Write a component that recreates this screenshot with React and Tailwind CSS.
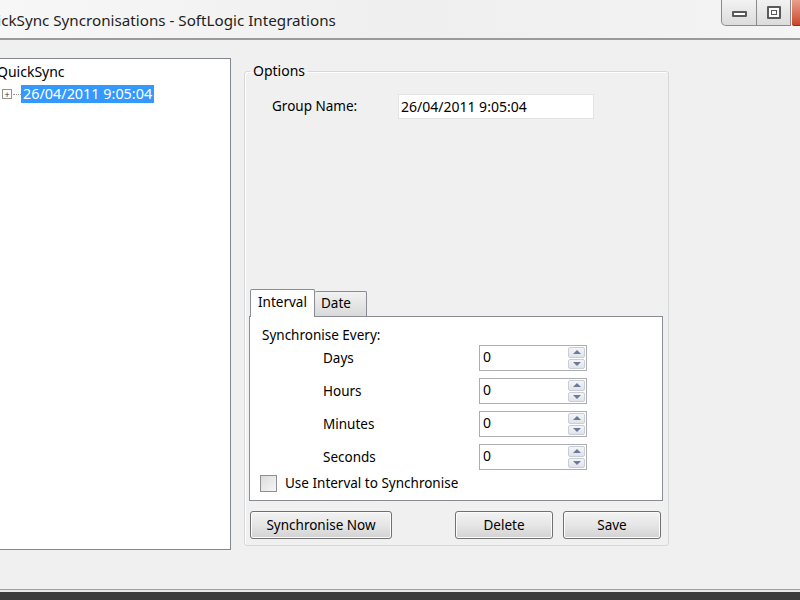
import React from 'react';

const font = { fontFamily: '"Noto Sans", "Open Sans", sans-serif' };

const Spinner = ({ value }) => (
  <div className="flex h-[26px] w-[108px] border border-[#abadb3] bg-white">
    <div className="flex-1 pl-[3px] text-[14px] leading-[22px] text-black">{value}</div>
    <div className="flex w-[18px] flex-col gap-[1px] py-[1px] pr-[1px]">
      <div className="flex flex-1 items-center justify-center rounded-[2px] border border-[#c8cdd6] bg-gradient-to-b from-[#f4f5f8] to-[#e0e3ea]">
        <div className="h-0 w-0 border-x-[4px] border-b-[4px] border-x-transparent border-b-[#6b7a99]" />
      </div>
      <div className="flex flex-1 items-center justify-center rounded-[2px] border border-[#c8cdd6] bg-gradient-to-b from-[#f4f5f8] to-[#e0e3ea]">
        <div className="h-0 w-0 border-x-[4px] border-t-[4px] border-x-transparent border-t-[#6b7a99]" />
      </div>
    </div>
  </div>
);

const WinButton = ({ children, className = '', onClick }) => (
  <button
    onClick={onClick}
    className={`h-[28px] rounded-[3px] border border-[#707070] bg-gradient-to-b from-[#f3f3f3] via-[#e6e6e6] to-[#d2d2d2] text-[13.5px] text-black shadow-[inset_0_0_0_1px_#fcfcfc] ${className}`}
  >
    {children}
  </button>
);

const intervals = ['Days', 'Hours', 'Minutes', 'Seconds'];

export default function App() {
  return (
    <div className="flex h-[600px] w-[800px] flex-col overflow-hidden bg-[#f0f0f0] text-black" style={font}>
      {/* title bar */}
      <div className="flex h-[40px] shrink-0 items-start border-b-[2px] border-[#9a9a9a] bg-gradient-to-r from-[#f7f7f7] via-[#efefef] to-[#f4f4f4]">
        <div className="-ml-[24px] mt-[9px] flex-1 whitespace-nowrap text-[15.2px] text-[#1e1e1e]">
          QuickSync Syncronisations - SoftLogic Integrations
        </div>
        <div className="mr-[-12px] flex h-[26px]">
          <div className="flex w-[36px] items-center justify-center rounded-bl-[5px] border border-t-0 border-[#8a8a8a] bg-gradient-to-b from-[#f2f2f2] to-[#dcdcdc]">
            <div className="mt-[2px] h-[6px] w-[15px] rounded-[1px] border-[2px] border-[#5a5a5a] bg-white" />
          </div>
          <div className="flex w-[34px] items-center justify-center border border-l-0 border-t-0 border-[#8a8a8a] bg-gradient-to-b from-[#f2f2f2] to-[#dcdcdc]">
            <div className="flex h-[13px] w-[14px] items-center justify-center rounded-[1px] border-[2px] border-[#5a5a5a] bg-white">
              <div className="h-[5px] w-[6px] border border-[#5a5a5a]" />
            </div>
          </div>
          <div className="ml-[1px] w-[20px] rounded-bl-[2px] border-b border-[#8a3020] bg-gradient-to-b from-[#e8a08a] to-[#c8452c]" />
        </div>
      </div>

      {/* body */}
      <div className="flex flex-1 items-start">
        {/* tree */}
        <div className="-ml-[6px] mt-[18px] h-[492px] w-[237px] shrink-0 border border-[#828790] bg-white pt-[3px] text-[14px]">
          <div className="pl-[2px] leading-[20px]">QuickSync</div>
          <div className="mt-[3px] flex items-center leading-[18px]">
            <div className="ml-[7px] flex h-[10px] w-[10px] items-center justify-center border border-[#919191] bg-white text-[9px] leading-none text-[#333]">+</div>
            <div className="ml-[1px] w-[8px] border-t border-dotted border-[#999]" />
            <div className="bg-[#3399ff] px-[2px] text-[14.4px] text-white">26/04/2011 9:05:04</div>
          </div>
        </div>

        {/* options group */}
        <fieldset className="ml-[13px] mt-[23px] h-[483px] w-[425px] rounded-[3px] border border-[#d5d9dc] shadow-[inset_1px_1px_0_#fff] px-[4px] text-[13.5px]">
          <legend className="ml-[1px] px-[3px] text-[14px] leading-[16px]">Options</legend>

          <div className="mt-[15px] flex items-center">
            <div className="ml-[23px] w-[126px]">Group Name:</div>
            <div className="h-[25px] w-[196px] border border-[#e3e3e3] bg-white pl-[2px] text-[14px] leading-[23px]">26/04/2011 9:05:04</div>
          </div>

          {/* tab control */}
          <div className="mt-[170px] flex items-end pl-[1px]">
            <div className="relative z-10 -mb-[1px] h-[28px] w-[65px] rounded-t-[2px] border border-b-0 border-[#898c95] bg-white pl-[7px] pt-[2px]">
              Interval
            </div>
            <div className="h-[25px] w-[52px] rounded-t-[2px] border border-b-0 border-l-0 border-[#898c95] bg-gradient-to-b from-[#f2f2f2] to-[#d9d9d9] pl-[6px] pt-[1px]">
              Date
            </div>
          </div>
          <div className="h-[185px] w-[414px] border border-[#898c95] bg-white pl-[12px] pt-[9px]">
            <div className="leading-[18px]">Synchronise Every:</div>
            <div className="mt-[1px] flex flex-col gap-[7px]">
              {intervals.map((label) => (
                <div key={label} className="flex items-center">
                  <div className="ml-[61px] w-[156px]">{label}</div>
                  <Spinner value="0" />
                </div>
              ))}
            </div>
            <div className="mt-[3px] flex items-center">
              <div className="-ml-[2px] h-[17px] w-[17px] border border-[#8f8f8f] bg-gradient-to-br from-[#dcdcdc] to-[#f6f6f6]" />
              <div className="ml-[8px]">Use Interval to Synchronise</div>
            </div>
          </div>

          {/* buttons */}
          <div className="mt-[10px] flex">
            <WinButton className="ml-[1px] w-[142px]">Synchronise Now</WinButton>
            <WinButton className="ml-[63px] w-[98px]">Delete</WinButton>
            <WinButton className="ml-[10px] w-[98px]">Save</WinButton>
          </div>
        </fieldset>
      </div>

      {/* bottom edge */}
      <div className="h-[3px] shrink-0 border-t border-[#a0a0a0] bg-[#e6e6e6]" />
      <div className="h-[8px] shrink-0 bg-[#3a3a3a]" />
    </div>
  );
}
